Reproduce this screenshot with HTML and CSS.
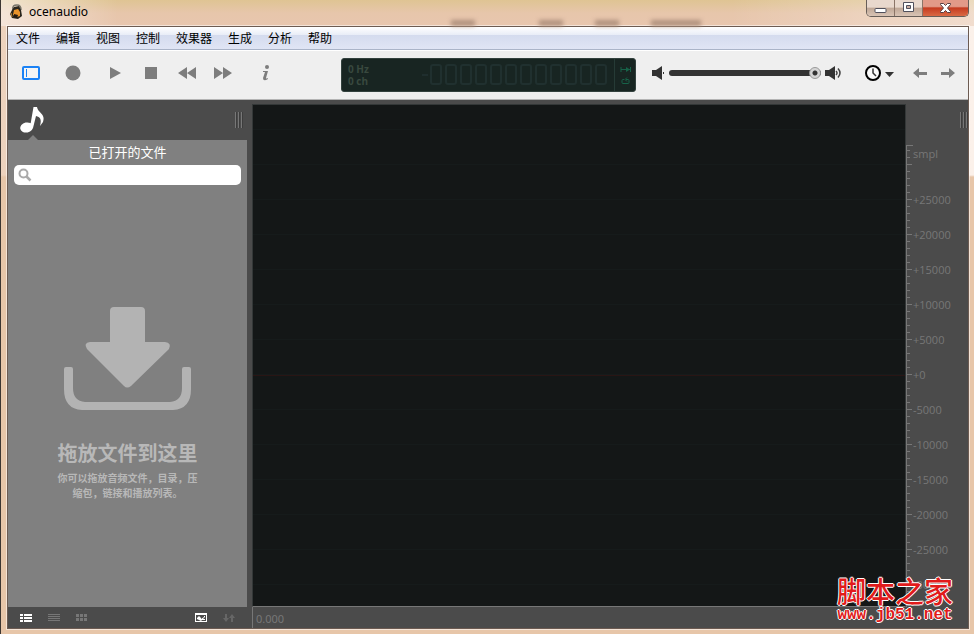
FILE: index.html
```html
<!DOCTYPE html>
<html lang="zh-CN">
<head>
<meta charset="utf-8">
<title>ocenaudio</title>
<link rel="stylesheet" href="styles.css">
</head>
<body>
<div class="window">
  <header class="titlebar">
    <svg class="app-icon" viewBox="0 0 14 16" aria-hidden="true"><path d="M4 6C3 2 5 1 8 1s4 2 4 5" fill="none" stroke="#77746a" stroke-width="1.500"/><path d="M5 3l5-1 2 4 1 6-4 3-6-1-2-4 2-4z" fill="#29251c"/><path d="M5 6l4-1 2 3v4l-3 1-4-2z" fill="#e8932a"/><path d="M5 10l4 1-1 3-3-1z" fill="#241a10"/><path d="M2 9l1 4" stroke="#b98a3c"/></svg>
    <span class="app-name">ocenaudio</span>
    <div class="ghosts" aria-hidden="true"><i></i><i></i><i></i><i></i></div>
    <div class="caption">
      <button class="cap" aria-label="最小化"><svg width="13" height="14" viewBox="0 0 13 14"><rect x="1" y="7.500" width="11" height="4" rx="1" fill="#fff" stroke="#50505c"/></svg></button>
      <button class="cap" aria-label="最大化"><svg width="13" height="14" viewBox="0 0 13 14"><path d="M1.500 1.500h10v9h-10z" fill="#fff" stroke="#50505c"/><path d="M4.500 4.500h4v3h-4z" fill="#c9aca0" stroke="#50505c"/></svg></button>
      <button class="cap close" aria-label="关闭"><svg width="13" height="14" viewBox="0 0 13 14"><path d="M1.500 2.500h3l2 2 2-2h3v1l-3 3.500 3 3.500v1h-3l-2-2-2 2h-3v-1l3-3.500-3-3.500z" fill="#fff" stroke="#573e42"/></svg></button>
    </div>
  </header>
  <div class="client">
    <nav class="menu"><a href="#">文件</a><a href="#">编辑</a><a href="#">视图</a><a href="#">控制</a><a href="#">效果器</a><a href="#">生成</a><a href="#">分析</a><a href="#">帮助</a></nav>
    <div class="toolbar">
      <div class="transport">
        <button aria-label="侧栏"><svg width="20" height="16" viewBox="0 0 20 16"><rect x="2" y="2" width="16" height="12" rx="1" fill="#f5f5f5" stroke="#1b82f5" stroke-width="2"/><path d="M5.500 4v8" stroke="#1b82f5"/></svg></button>
        <button aria-label="录音"><svg width="16" height="16"><circle cx="8" cy="8" r="7.500"/></svg></button>
        <button aria-label="播放"><svg width="16" height="16"><path d="M3 2l11 6-11 6z"/></svg></button>
        <button aria-label="停止"><svg width="16" height="16"><path d="M2 2h12v12H2z"/></svg></button>
        <button aria-label="后退"><svg width="20" height="16"><path d="M10 2v12L1 8zM19 2v12l-9-6z"/></svg></button>
        <button aria-label="前进"><svg width="20" height="16"><path d="M1 2l9 6-9 6zM10 2l9 6-9 6z"/></svg></button>
        <button class="info" aria-label="信息"><svg width="12" height="18"><circle cx="7" cy="3" r="2"/><path d="M3 7h5L6 14q0 1 2 0v1q-5 3-5-1l2-6H3z"/></svg></button>
      </div>
      <div class="display">
        <div class="format"><span>0 Hz</span><span>0 ch</span></div>
        <svg class="digits" width="188" height="24" viewBox="0 0 188 24" aria-hidden="true"><defs><rect id="digit" x="1" y="2" width="10" height="19" rx="2"/></defs><path d="M1 12h6" stroke="#26393a"/><g fill="none" stroke="#20302f" stroke-width="2"><use href="#digit" x="9"/><use href="#digit" x="24"/><use href="#digit" x="39"/><use href="#digit" x="54"/><use href="#digit" x="69"/><use href="#digit" x="84"/><use href="#digit" x="99"/><use href="#digit" x="114"/><use href="#digit" x="129"/><use href="#digit" x="144"/><use href="#digit" x="159"/><use href="#digit" x="174"/></g></svg>
        <div class="modes"><svg width="12" height="24" viewBox="0 0 12 24" fill="none" stroke="#176349"><path d="M1 4v5M1 6.500h9M10.500 4v5"/><path d="M6 4l4 2.500L6 9z" fill="#176349" stroke="none"/><path d="M4 16.500H3q-1 0-1 1v2q0 1 1 1h5q1 0 1-1v-2q0-1-1-1H6M7 14.500l-2 2 2 2"/></svg></div>
      </div>
      <div class="volume">
        <svg width="14" height="16" viewBox="0 0 14 16" fill="#333"><path d="M1 5h4l6-4v14l-6-4H1z"/><path d="M12 7h1v2h-1z"/></svg>
        <input type="range" min="0" max="100" value="100" aria-label="音量">
        <svg width="18" height="16" viewBox="0 0 18 16" fill="#333"><path d="M0 5h4l6-4v14l-6-4H0z"/><path d="M11 6q2 2 0 4M13 3.500q4 4.500 0 9" fill="none" stroke="#444" stroke-width="1.500"/></svg>
      </div>
      <div class="history">
        <button aria-label="历史"><svg width="32" height="18" viewBox="0 0 32 18"><circle cx="9" cy="9" r="7" fill="#fafafa" stroke="#000" stroke-width="2"/><path d="M9 4.500V9l3 3" fill="none" stroke="#333" stroke-width="1.500"/><path d="M21 8h9l-4.500 5z" fill="#333"/></svg></button>
        <button aria-label="撤销"><svg width="16" height="16"><path d="M1 8l6-5v4h8v3H7v3z"/></svg></button>
        <button aria-label="重做"><svg width="16" height="16"><path d="M15 8L9 3v4H1v3h8v3z"/></svg></button>
      </div>
    </div>
    <main class="workspace">
      <aside class="sidebar">
        <div class="tabs">
          <svg class="note" width="28" height="36" viewBox="0 0 28 36" aria-hidden="true"><ellipse cx="7.500" cy="23.500" rx="6.500" ry="5" transform="rotate(-12 7.500 23)" fill="#fff"/><path d="M11 23L14.500 3H18c1 6 9 7 6 15l-3 4c2-7 0-9-4-10l-3 12z" fill="#fff"/><path d="M9 36l5-5 5 5z" fill="#808080"/></svg>
          <i class="grip"></i>
        </div>
        <div class="files">
          <h2>已打开的文件</h2>
          <label class="search"><svg width="14" height="14" viewBox="0 0 14 14" fill="none" stroke="#aaa"><circle cx="5.500" cy="5.500" r="4" stroke-width="2"/><path d="M8.500 8.500l4 4" stroke-width="2.500"/></svg><input type="text" aria-label="搜索"></label>
          <div class="drop">
            <svg width="130" height="106" viewBox="0 0 130 106" aria-hidden="true"><path d="M47 5q0-4 4-4h27q4 0 4 4v31h20q7 1 4 7L68 80q-4 3-7 0L24 43q-4-6 3-7h20z" fill="#b3b3b3"/><path d="M1 63q0-2 2-2h5q2 0 2 2v19q0 13 12 14h85q12-1 12-14V63q0-2 2-2h5q2 0 2 2v20q0 20-18 21H19Q1 103 1 83z" fill="#b3b3b3"/></svg>
            <h3>拖放文件到这里</h3>
            <p>你可以拖放音频文件，目录，压缩包，链接和播放列表。</p>
          </div>
        </div>
        <div class="views">
          <button class="on" aria-label="详细"><svg width="12" height="8"><path d="M0 0h3v2H0zM4 0h8v2H4zM0 3h3v2H0zM4 3h8v2H4zM0 6h3v2H0zM4 6h8v2H4z"/></svg></button>
          <button aria-label="列表"><svg width="12" height="8"><path d="M0 0h12v1H0zM0 2h12v1H0zM0 4h12v1H0zM0 6h12v1H0z"/></svg></button>
          <button aria-label="网格"><svg width="12" height="8"><path d="M0 0h3v3H0zM4 0h3v3H4zM8 0h3v3H8zM0 4h3v3H0zM4 4h3v3H4zM8 4h3v3H8z"/></svg></button>
          <button class="on push" aria-label="预览"><svg width="12" height="10"><path d="M0 0h12v9H0z"/><path d="M1 2h10v6H1z" fill="#4a4a4a"/><path d="M2 6V5l2-2 2 2v1l3-2V3h1v1L6 8zM7 6h3v1H7z"/></svg></button>
          <button class="dim" aria-label="排序"><svg width="12" height="10"><path d="M2 1h2v4h2L3 9 0 5h2zM8 9h2V5h2L9 1 6 5h2z"/></svg></button>
        </div>
      </aside>
      <section class="editor">
        <div class="wave" aria-label="波形"></div>
        <div class="scale">
          <i class="grip"></i>
          <ol><li>smpl</li><li>+25000</li><li>+20000</li><li>+15000</li><li>+10000</li><li>+5000</li><li>+0</li><li>-5000</li><li>-10000</li><li>-15000</li><li>-20000</li><li>-25000</li><li>-30000</li></ol>
        </div>
        <div class="timeline">0.000</div>
      </section>
    </main>
  </div>
  <div class="watermark"><strong>脚本之家</strong><span>www.jb51.net</span></div>
</div>
</body>
</html>
```
FILE: styles.css
```css
* { box-sizing: border-box; }
body { margin: 0; font-family: "Noto Sans", "Noto Sans CJK SC", sans-serif; font-size: 12px; }
button { display: flex; align-items: center; justify-content: center; padding: 0; border: 0; background: none; }
h2, h3, p, ol { margin: 0; padding: 0; font-weight: normal; }
svg { display: block; flex: none; }

.window { position: relative; display: flex; flex-direction: column; min-height: 100vh; padding: 0 5px 5px 6px; border-left: 1px solid #3c3632; background: linear-gradient(#fff0 175px, #e7c6a9 177px), linear-gradient(90deg, #edd2bd, #fbf1ea); }
.titlebar { display: flex; align-items: flex-start; height: 26px; margin: 0 -5px 0 -6px; padding: 0 5px 0 8px; background: linear-gradient(90deg, #fff8 0, #fff0 12%, #fff0 75%, #fff6), linear-gradient(#dfc493, #e7c6ab 50%, #e8c6ae); }
.app-icon { width: 14px; height: 16px; margin-top: 4px; }
.app-name { margin: 3px 0 0 6px; font-size: 12px; line-height: 17px; color: #000; }
.ghosts { display: flex; flex: 1; align-self: flex-end; justify-content: flex-end; gap: 32px; padding-right: 165px; filter: blur(2px); }
.ghosts i { width: 24px; height: 6px; background: #b0917e; }
.ghosts i:first-child { margin-right: 32px; }
.ghosts i:last-child { width: 50px; }
.caption { display: flex; height: 17px; border: 1px solid #675e58; border-top: 0; border-radius: 0 0 5px 5px; overflow: hidden; }
.cap { width: 28px; border-right: 1px solid #8a7467; background: linear-gradient(#e8d8cd 45%, #bfa796 50%, #d9c4b5); }
.close { width: 45px; border: 0; background: linear-gradient(#e29a88 40%, #c53c20 50%, #d96a45); }

.client { display: flex; flex: 1; flex-direction: column; border: 1px solid #6c5b52; box-shadow: 0 0 0 1px #fff8; background: #4b4b4b; }
.menu { display: flex; height: 23px; gap: 16px; padding: 0 8px; border-bottom: 1px solid #aab4c8; background: linear-gradient(#fff, #e9edf7 35%, #d4dbee 36%, #e0e5f5); }
.menu a { color: #000; line-height: 23px; text-decoration: none; }
.toolbar { display: flex; align-items: center; height: 50px; padding: 0 12px 4px 13px; border-bottom: 1px solid #b4b4b4; border-top: 1px solid #fff; background: #efefef; fill: #7d7d7d; }
.transport { display: flex; align-items: center; gap: 16px; width: 320px; }
.transport button { width: 20px; height: 20px; }
.transport button:nth-child(2) { margin: 0 6px; }
.transport .info { margin-left: 7px; }
.display { display: flex; flex: 1; align-items: center; height: 34px; margin-top: 4px; padding-left: 6px; border: 1px solid #33413e; border-radius: 3px; background: #182522; color: #39493f; }
.format { display: flex; flex: 1; flex-direction: column; font-family: "Open Sans", sans-serif; font-size: 10px; font-weight: bold; line-height: 12px; }
.modes { display: flex; align-items: center; height: 32px; margin-left: 5px; padding: 0 3px 0 5px; border-left: 1px solid #263b36; }
.volume { display: flex; align-items: center; gap: 4px; margin-left: 15px; }
.volume input { width: 152px; height: 12px; margin: 0; appearance: none; background: none; }
.volume input::-webkit-slider-runnable-track { height: 6px; border-radius: 3px; background: #333; }
.volume input::-webkit-slider-thumb { width: 12px; height: 12px; margin-top: -3px; appearance: none; border: 1px solid #999; border-radius: 50%; background: radial-gradient(#333 2px, #d5d5d5 3px); }
.history { display: flex; gap: 12px; margin-left: 21px; }
.history button:nth-child(2) { margin-left: 4px; }

.workspace { display: grid; flex: 1; grid-template-columns: 239px 1fr; gap: 5px; }
.sidebar { display: flex; flex-direction: column; }
.tabs { display: flex; justify-content: space-between; height: 40px; padding: 4px 4px 0 11px; }
.grip { width: 8px; height: 16px; margin-top: 8px; background: repeating-linear-gradient(90deg, #777 0 1px, #3d3d3d 1px 2px, #4b4b4b 2px 3px); }
.files { display: flex; flex: 1; flex-direction: column; padding: 3px 6px; background: #808080; }
.files h2 { color: #fff; font-size: 13px; line-height: 18px; text-align: center; }
.search { display: flex; align-items: center; height: 20px; margin-top: 4px; padding: 0 4px; border-radius: 5px; background: #fff; }
.search input { flex: 1; min-width: 0; border: 0; outline: 0; background: none; }
.drop { display: flex; flex: 1; flex-direction: column; align-items: center; padding-top: 121px; color: #b8b8b8; text-align: center; }
.drop h3 { margin-top: 28px; font-size: 20px; font-weight: bold; line-height: 28px; }
.drop p { width: 142px; margin-top: 3px; font-size: 10px; font-weight: bold; line-height: 15px; }
.views { display: flex; align-items: center; height: 21px; gap: 16px; padding: 0 12px; fill: #777; }
.views .on { fill: #fff; }
.views .push { margin-left: auto; }
.views .dim { fill: #666; }

.editor { display: grid; grid-template: 1fr 21px / 1fr 62px; padding-top: 4px; }
.wave { border: 1px solid #343838; border-bottom-color: #777; background: linear-gradient(#291514, #291514) 0 270px / 100% 1px no-repeat, repeating-linear-gradient(#141717 0 24px, #161b1b 24px 25px, #141717 25px 35px); }
.scale { display: flex; flex-direction: column; color: #777; font-family: "Open Sans", sans-serif; font-size: 11px; }
.scale .grip { flex: none; align-self: flex-end; margin: 8px 0 0; }
.scale ol { flex: 1; margin-top: 17px; padding-left: 6px; border-left: 1px solid #777; background: linear-gradient(#777, #777) 0 0 / 6px 1px no-repeat, repeating-linear-gradient(#fff0 0 19px, #777 19px 20px, #fff0 20px 35px) 0 0 / 5px 100% no-repeat, repeating-linear-gradient(#fff0 0 5px, #777 5px 6px, #fff0 6px 7px) 0 0 / 3px 100% no-repeat; list-style: none; }
.scale li { height: 35px; line-height: 18px; }
.scale li:first-child { height: 46px; }
.scale li:last-child { height: 18px; }
.timeline { grid-column: 1 / -1; padding: 4px 3px; border-left: 1px solid #777; color: #777; font-size: 11px; line-height: 16px; }
.watermark { position: absolute; right: 21px; bottom: 11px; display: flex; flex-direction: column; color: #e11b1b; text-align: center; text-shadow: 1px 0 #fff, -1px 0 #fff, 0 1px #fff, 0 -1px #fff; }
.watermark strong { font-size: 29px; font-weight: 500; line-height: 30px; }
.watermark span { font: bold 16px/16px "Liberation Mono", monospace; }
```
